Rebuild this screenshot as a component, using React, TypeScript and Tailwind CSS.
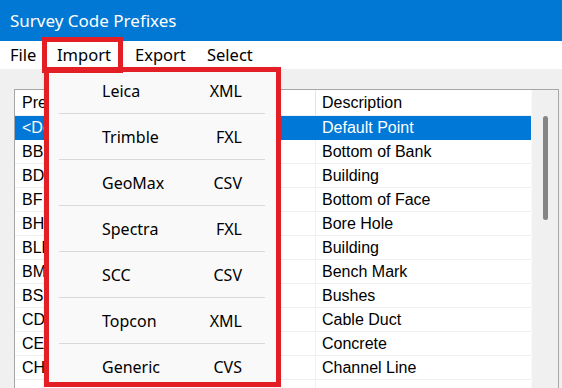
import React from 'react';

const rows = [
  { code: '<Default>', desc: 'Default Point' },
  { code: 'BB', desc: 'Bottom of Bank' },
  { code: 'BD', desc: 'Building' },
  { code: 'BF', desc: 'Bottom of Face' },
  { code: 'BH', desc: 'Bore Hole' },
  { code: 'BLD', desc: 'Building' },
  { code: 'BM', desc: 'Bench Mark' },
  { code: 'BS', desc: 'Bushes' },
  { code: 'CD', desc: 'Cable Duct' },
  { code: 'CE', desc: 'Concrete' },
  { code: 'CH', desc: 'Channel Line' },
];

const importItems = [
  { name: 'Leica', fmt: 'XML' },
  { name: 'Trimble', fmt: 'FXL' },
  { name: 'GeoMax', fmt: 'CSV' },
  { name: 'Spectra', fmt: 'FXL' },
  { name: 'SCC', fmt: 'CSV' },
  { name: 'Topcon', fmt: 'XML' },
  { name: 'Generic', fmt: 'CVS' },
];

const App = () => {
  return (
    <div className="relative w-[562px] h-[388px] overflow-hidden bg-[#f0f0f0] font-['Noto_Sans',sans-serif]">
      {/* Title bar */}
      <div className="h-[41px] bg-[#0078d4] text-white text-[17px] pl-[10px] flex items-center">
        Survey Code Prefixes
      </div>

      {/* Menu bar */}
      <div className="h-[28px] bg-white flex items-center pl-[10px] text-[16.5px] text-black">
        <span className="w-[47px]">File</span>
        <span className="w-[78px]">Import</span>
        <span className="w-[72px]">Export</span>
        <span>Select</span>
      </div>

      {/* List */}
      <div className="mt-[20px] ml-[14px] w-[545px] h-[320px] bg-white border border-[#a6a6a6] flex font-['Liberation_Sans',Arial,sans-serif] text-[16px] text-black">
        <div className="w-[516px] flex flex-col">
          <div className="h-[26px] flex items-center border-b border-[#f0f0f0]">
            <div className="w-[301px] pl-[7px] border-r border-[#e5e5e5] h-full flex items-center">Prefix</div>
            <div className="pl-[6px]">Description</div>
          </div>
          {rows.map((r, i) => (
            <div
              key={i}
              className={`h-[24px] flex border-b ${i === 0 ? 'bg-[#0078d7] text-white border-[#0078d7]' : 'border-[#f0f0f0]'}`}
            >
              <div className={`w-[301px] pl-[7px] flex items-center border-r ${i === 0 ? 'border-[#0078d7]' : 'border-[#f0f0f0]'}`}>{r.code}</div>
              <div className="pl-[6px] flex items-center">{r.desc}</div>
            </div>
          ))}
          <div className="flex-1 flex">
            <div className="w-[301px] border-r border-[#f0f0f0]" />
          </div>
        </div>
        {/* Scrollbar */}
        <div className="flex-1 bg-[#f0f0f0] border-l border-[#fafafa] pt-[26px] flex justify-center">
          <div className="w-[5px] h-[104px] rounded-full bg-[#858585]" />
        </div>
      </div>

      {/* Import dropdown */}
      <div className="absolute left-[44px] top-[68px] w-[236px] h-[320px] bg-[#f9f9f9] text-[16px] text-black shadow">
        {importItems.map((it, i) => (
          <div key={it.name}>
            {i > 0 && <div className="h-px bg-[#d9d9d9] mx-[15px]" />}
            <div className="h-[45px] flex items-center justify-between pl-[58px] pr-[38px]">
              <span>{it.name}</span>
              <span>{it.fmt}</span>
            </div>
          </div>
        ))}
      </div>

      {/* Red highlight annotations */}
      <div className="absolute left-[42px] top-[37px] w-[81px] h-[36px] border-[5px] border-[#e31e24] pointer-events-none" />
      <div className="absolute left-[44px] top-[67px] w-[237px] h-[320px] border-[5px] border-[#e31e24] pointer-events-none" />
    </div>
  );
};

export default App;
